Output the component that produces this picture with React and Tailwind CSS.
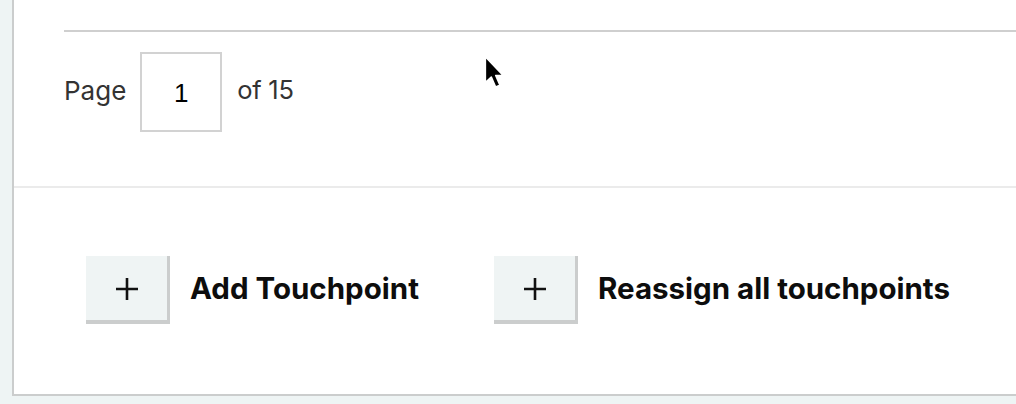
import React from 'react'

function PlusButton({ label, className }) {
    return (
        <div className={"flex items-center " + (className || "")}>
            <button className="flex h-[68px] w-[84px] items-center justify-center border-r-[3px] border-b-[4px] border-[#cbcdcd] bg-[#eff4f4]">
                <svg width="24" height="24" viewBox="0 0 24 24" className="mt-[2px]">
                    <path d="M12 1v22M1 12h22" stroke="#111" strokeWidth="2.6" fill="none" />
                </svg>
            </button>
            <span className="ml-[20px] mt-[-3px] text-[29.5px] font-bold text-[#0d0d0d]">{label}</span>
        </div>
    )
}

function Cursor() {
    return (
        <svg className="absolute left-[481px] top-[54px]" width="26" height="40" viewBox="0 0 24 36">
            <path d="M4 2 L4 26 L9.5 20.8 L13.5 30 L17.5 28.3 L13.6 19.4 L20.5 19.4 Z" fill="#000" stroke="#fff" strokeWidth="1.5" strokeLinejoin="round" />
        </svg>
    )
}

export default function App() {
    return (
        <div className="relative h-[404px] w-[1016px] overflow-hidden bg-[#eef4f4] pl-[12px]" style={{ fontFamily: 'Inter, "Liberation Sans", sans-serif' }}>
            <div className="h-[396px] border-l-2 border-b-2 border-[#cbcdcd] bg-white">
                <div className="pl-[50px] pt-[30px]">
                    <div className="border-t-2 border-[#cfcfcf]"></div>
                    <div className="flex items-center pt-[20px] pb-[54px]">
                        <span className="mt-[-4px] text-[26px] text-[#333]">Page</span>
                        <div className="ml-[14px] flex h-[80px] w-[82px] items-center justify-center border-2 border-[#d2d2d2] pt-[2px] text-[26px] text-black" style={{ fontFamily: '"Liberation Sans", Arial, sans-serif' }}>
                            1
                        </div>
                        <span className="ml-[15px] mt-[-4px] text-[25.5px] tracking-[-0.3px] text-[#333]">of 15</span>
                    </div>
                </div>
                <div className="border-t-2 border-[#ebebeb]"></div>
                <div className="flex pl-[72px] pt-[68px]">
                    <PlusButton label="Add Touchpoint" className="w-[408px]" />
                    <PlusButton label="Reassign all touchpoints" />
                </div>
            </div>
            <Cursor />
        </div>
    )
}
